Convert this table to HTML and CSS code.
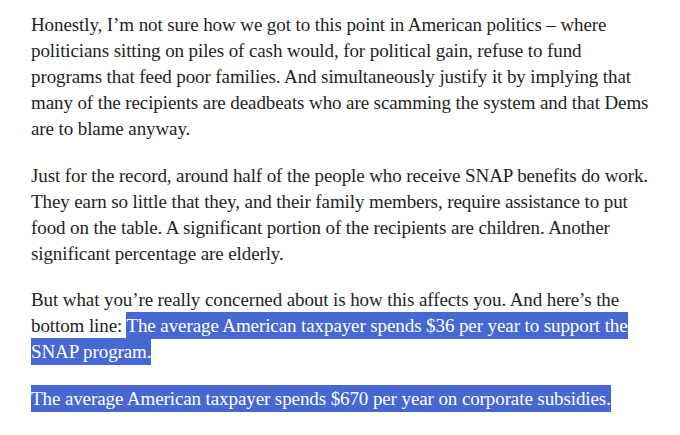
FILE: index.html
```html
<!DOCTYPE html>
<html lang="en">
<head>
<meta charset="utf-8">
<link rel="stylesheet" href="styles.css">
</head>
<body>
<article class="post">
<p class="para">Honestly, I’m not sure how we got to this point in American politics – where<br>politicians sitting on piles of cash would, for political gain, refuse to fund<br>programs that feed poor families. And simultaneously justify it by implying that<br>many of the recipients are deadbeats who are scamming the system and that Dems<br>are to blame anyway.</p>
<p class="para">Just for the record, around half of the people who receive SNAP benefits do work.<br>They earn so little that they, and their family members, require assistance to put<br>food on the table. A significant portion of the recipients are children. Another<br>significant percentage are elderly.</p>
<p class="para">But what you’re really concerned about is how this affects you. And here’s the<br>bottom line: <span class="sel">The average American taxpayer spends $36 per year to support the </span><br><span class="sel">SNAP program. </span></p>
<p class="para"><span class="sel">The average American taxpayer spends $670 per year on corporate subsidies.</span></p>
</article>
</body>
</html>
```
FILE: styles.css
```css
html, body {
  margin: 0;
  padding: 0;
  background: #ffffff;
}
.post {
  padding: 12px 0 0 31px;
  font-family: "Liberation Serif", serif;
  font-size: 19px;
  line-height: 26px;
  letter-spacing: -0.1px;
  color: #1f1f1f;
  white-space: nowrap;
}
.para {
  margin: 0 0 20.5px 0;
}
.sel {
  background: #4767d3;
  color: #ffffff;
  padding: 3px 0;
}
```
